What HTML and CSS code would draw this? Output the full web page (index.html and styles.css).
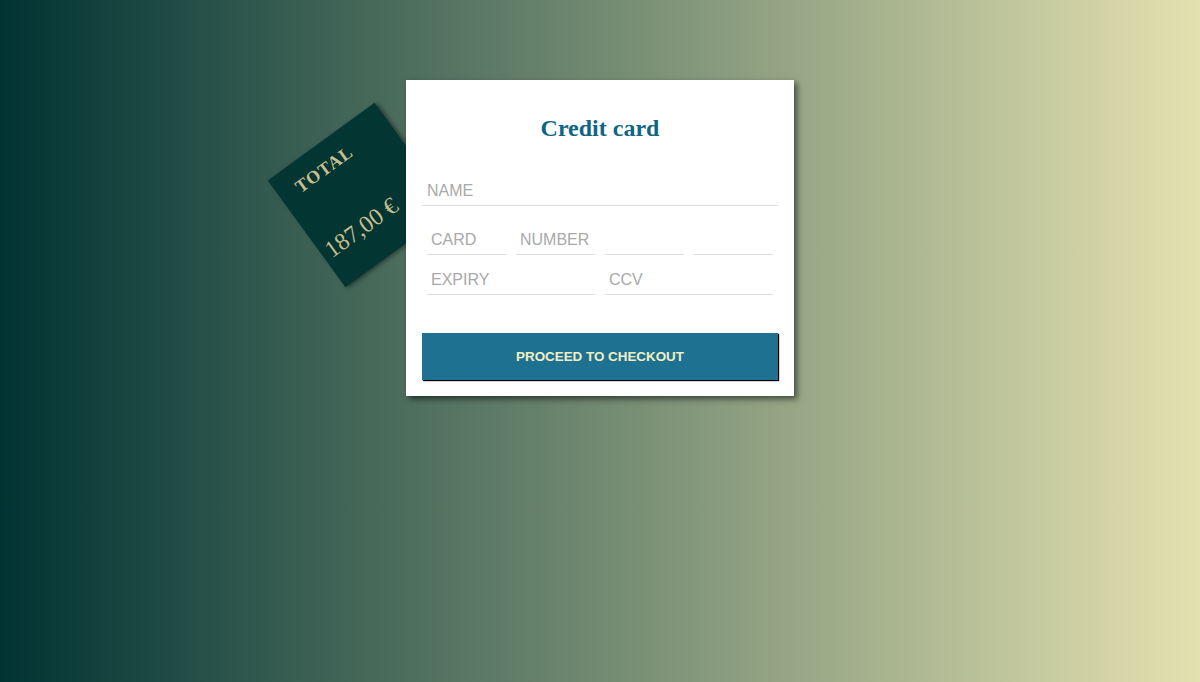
FILE: index.html
```html
<!DOCTYPE html>
<html>
<head>
<meta charset="utf-8">
<link rel="stylesheet" href="styles.css">
</head>
<body>
<div class="stage">
  <div class="card">
    <div class="total">
      <div class="total-label">TOTAL</div>
      <div class="total-amount">187,00 €</div>
    </div>
    <h1 class="title">Credit card</h1>
    <input class="field field-name" type="text" placeholder="NAME">
    <div class="row row-4">
      <input class="field" type="text" placeholder="CARD">
      <input class="field" type="text" placeholder="NUMBER">
      <input class="field" type="text">
      <input class="field" type="text">
    </div>
    <div class="row row-2">
      <input class="field" type="text" placeholder="EXPIRY">
      <input class="field" type="text" placeholder="CCV">
    </div>
    <button class="checkout" type="button">PROCEED TO CHECKOUT</button>
  </div>
</div>
</body>
</html>
```

FILE: styles.css
```css
html, body {
  margin: 0;
  padding: 0;
  height: 100%;
}
body {
  background: linear-gradient(to right, #003333 0%, #e4e1b0 100%);
  font-family: "Liberation Sans", Arial, sans-serif;
  overflow: hidden;
}
.stage {
  padding-top: 80px;
}
.card {
  position: relative;
  width: 356px;
  margin: 0 auto;
  padding: 16px;
  background: #ffffff;
  box-shadow: 3px 3px 6px rgba(0, 0, 0, 0.55);
  display: flex;
  flex-direction: column;
}
.total {
  position: absolute;
  left: -112px;
  top: 49px;
  width: 132px;
  height: 132px;
  box-sizing: border-box;
  background: #033532;
  transform: rotate(-36deg);
  box-shadow: 2px 2px 4px rgba(0, 0, 0, 0.45);
  z-index: -1;
  color: #c6bf8f;
  font-family: "Liberation Serif", "Times New Roman", serif;
  padding: 13px 0 0 19px;
}
.total-label {
  font-weight: bold;
  font-size: 18px;
  letter-spacing: 1px;
  line-height: 22px;
}
.total-amount {
  font-size: 24px;
  line-height: 28px;
  margin-top: 44px;
  margin-left: -13px;
  white-space: nowrap;
}
.title {
  margin: 18px 0 0;
  font-family: "Liberation Serif", "Times New Roman", serif;
  font-weight: bold;
  font-size: 24px;
  line-height: 28px;
  color: #0f6684;
  text-align: center;
}
.field {
  box-sizing: border-box;
  height: 30px;
  border: none;
  border-bottom: 1px solid #dddddd;
  padding: 1px 4px 0;
  font-family: "Liberation Sans", Arial, sans-serif;
  font-size: 16px;
  color: #555;
  background: transparent;
  outline: none;
  min-width: 0;
}
.field::placeholder {
  color: #a9a9a9;
}
.field-name {
  margin-top: 34px;
  width: 100%;
  padding-left: 5px;
}
.row {
  display: grid;
  gap: 10px;
  padding: 0 5px;
}
.row-4 {
  grid-template-columns: repeat(4, 1fr);
  margin-top: 19px;
}
.row-2 {
  grid-template-columns: repeat(2, 1fr);
  margin-top: 10px;
}
.checkout {
  margin-top: 38px;
  height: 47px;
  width: 100%;
  border: none;
  background: #1e7190;
  color: #f2eec4;
  font-family: "Liberation Sans", Arial, sans-serif;
  font-weight: bold;
  font-size: 13.4px;
  box-shadow: 1px 1px 1px #000;
  cursor: pointer;
}
```
